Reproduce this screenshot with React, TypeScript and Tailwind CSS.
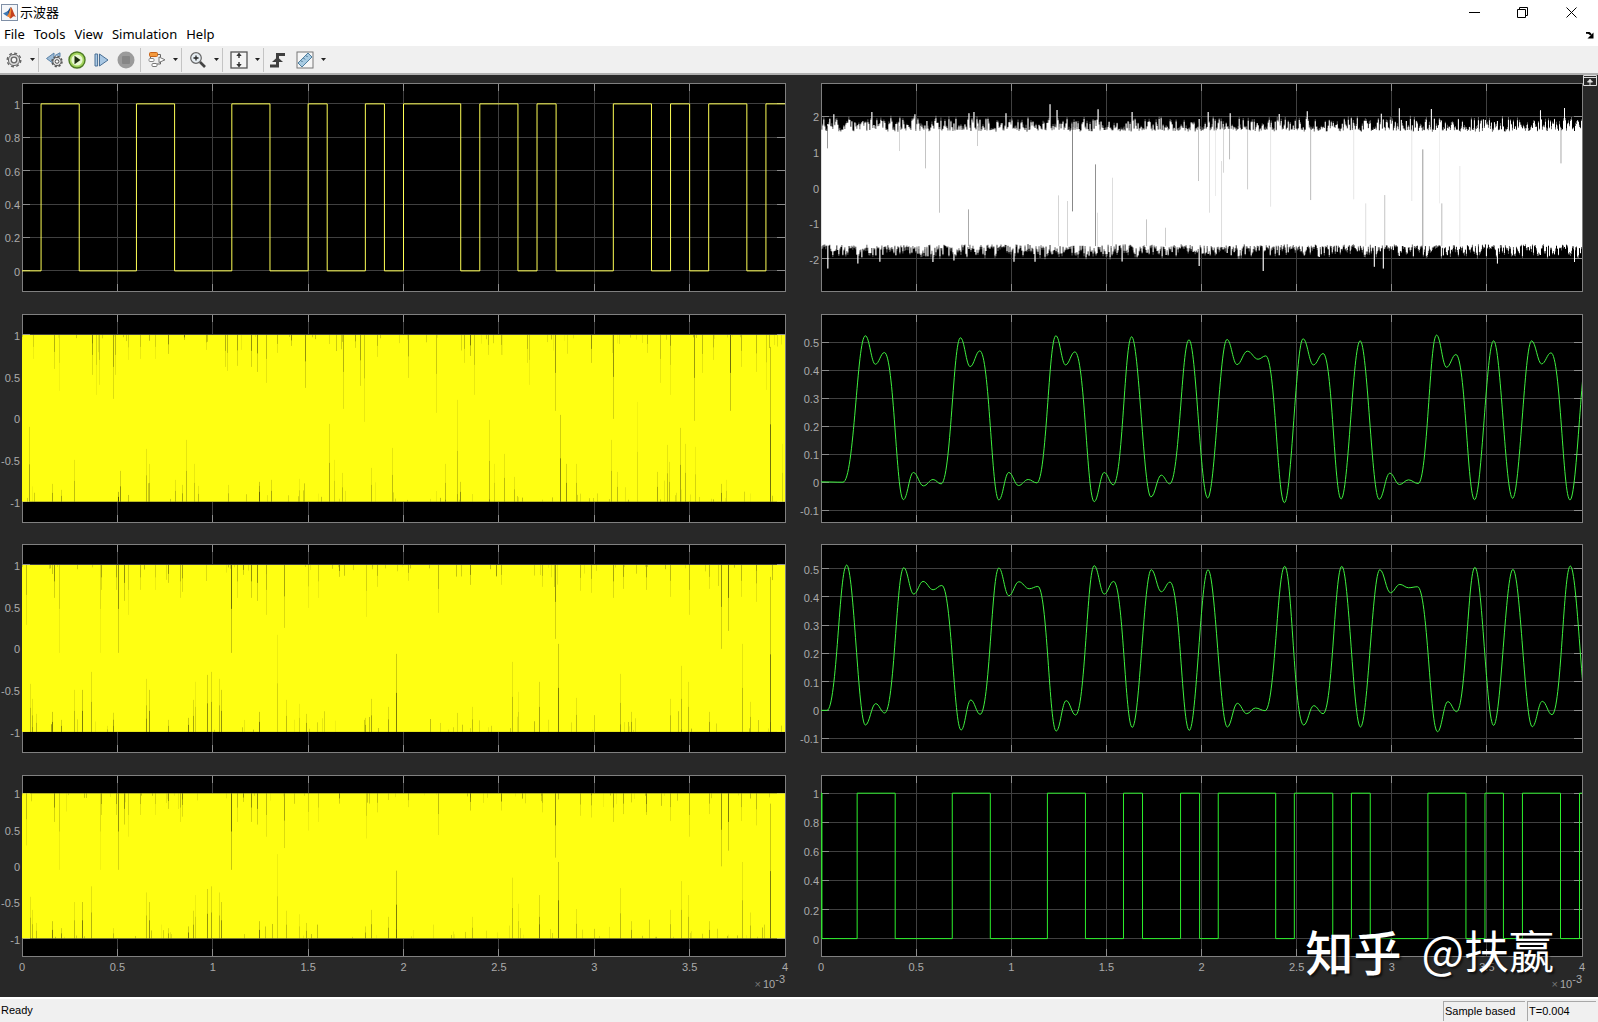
import type { ReactNode } from 'react';

type Point = [number, number];
type Spike = [number, number, number];

const X_TICKS = ['0', '0.5', '1', '1.5', '2', '2.5', '3', '3.5', '4'];

const SOURCE_EDGES = [1, 3, 6, 8, 11, 13, 15, 16, 18, 19, 20, 23, 24, 26, 27, 28, 31, 33, 34, 35, 36, 38, 39];
const OUTPUT_EDGES = [
  0.01, 0.05, 1.9, 3.9, 6.9, 8.9, 11.9, 13.9, 15.9, 16.9, 18.9, 19.9, 20.88, 23.9, 24.88, 26.9, 27.88, 28.87, 31.9,
  33.9, 34.9, 35.87, 36.87, 38.87, 39.87,
];

// turning points of the filtered signals
const FILTER_A: Point[] = [
  [64, 515], [130, 516], [197, 79], [227, 164], [254, 129], [311, 568], [341, 487], [371, 527], [400, 508], [424, 521],
  [482, 85], [511, 171], [540, 124], [597, 569], [627, 487], [656, 526], [685, 508], [711, 518], [768, 79], [797, 166],
  [825, 127], [883, 574], [913, 487], [940, 524], [995, 82], [1053, 560], [1084, 495], [1109, 521], [1167, 91],
  [1223, 563], [1281, 90], [1311, 165], [1342, 125], [1374, 149], [1397, 139], [1453, 577], [1509, 88], [1540, 166],
  [1569, 132], [1623, 566], [1680, 94], [1737, 567], [1769, 489], [1798, 523], [1825, 509], [1854, 520], [1909, 77],
  [1939, 173], [1967, 135], [2023, 568], [2080, 94], [2137, 564], [2194, 94], [2224, 163], [2252, 130], [2309, 569],
  [2366, 90],
];
const FILTER_B: Point[] = [
  [64, 513], [82, 513], [141, 78], [197, 557], [228, 493], [255, 521], [312, 86], [342, 165], [370, 127], [400, 152],
  [426, 139], [484, 572], [513, 482], [541, 525], [597, 87], [627, 170], [657, 128], [688, 149], [714, 142], [769, 575],
  [799, 484], [827, 527], [883, 80], [913, 165], [941, 127], [997, 564], [1054, 92], [1084, 158], [1110, 129],
  [1168, 573], [1224, 92], [1282, 563], [1312, 492], [1340, 523], [1366, 506], [1395, 514], [1454, 82], [1511, 557],
  [1541, 499], [1569, 523], [1625, 82], [1681, 563], [1739, 92], [1771, 161], [1799, 136], [1825, 146], [1852, 143],
  [1912, 577], [1943, 487], [1969, 517], [2024, 85], [2080, 558], [2138, 91], [2196, 562], [2226, 486], [2255, 526],
  [2310, 81], [2367, 560],
];

// gaps in the carrier band: x, length, opacity
const CARRIER_A_TOP: Spike[] = [
  [11, 24, 0.2], [32, 34, 0.35], [37, 56, 0.15], [70, 40, 0.4], [74, 60, 0.2], [77, 50, 0.25], [91, 64, 0.4],
  [93, 40, 0.3], [106, 25, 0.2], [118, 24, 0.25], [133, 24, 0.2], [146, 19, 0.5], [162, 5, 0.6], [184, 15, 0.3],
  [203, 32, 0.35], [205, 36, 0.3], [215, 31, 0.4], [229, 32, 0.5], [235, 37, 0.5], [244, 48, 0.3], [255, 18, 0.3],
  [269, 11, 0.5], [283, 53, 0.5], [321, 74, 0.35], [333, 13, 0.4], [338, 51, 0.4], [342, 87, 0.25], [355, 22, 0.3],
  [386, 43, 0.35], [414, 78, 0.25], [442, 28, 0.3], [448, 21, 0.6], [452, 60, 0.25], [466, 20, 0.3], [479, 20, 0.3],
  [505, 28, 0.3], [507, 50, 0.2], [533, 76, 0.45], [569, 28, 0.5], [591, 84, 0.5], [625, 18, 0.3], [638, 48, 0.25],
  [648, 60, 0.2], [672, 86, 0.45], [680, 38, 0.3], [691, 25, 0.3], [708, 76, 0.65], [719, 32, 0.3], [734, 37, 0.3],
  [744, 55, 0.2],
];
const CARRIER_A_BOTTOM: Spike[] = [
  [7, 75, 0.4], [30, 18, 0.4], [39, 12, 0.4], [52, 42, 0.3], [96, 10, 0.8], [98, 31, 0.5], [124, 53, 0.3],
  [127, 38, 0.3], [153, 22, 0.3], [160, 17, 0.4], [164, 62, 0.3], [172, 38, 0.25], [176, 16, 0.3], [206, 17, 0.3],
  [237, 20, 0.6], [249, 22, 0.4], [277, 23, 0.2], [307, 78, 0.35], [312, 42, 0.2], [320, 29, 0.3], [349, 34, 0.3],
  [370, 54, 0.3], [423, 38, 0.3], [435, 102, 0.25], [438, 20, 0.5], [467, 82, 0.3], [472, 38, 0.2], [482, 48, 0.3],
  [492, 25, 0.3], [538, 87, 0.55], [544, 38, 0.5], [554, 38, 0.3], [589, 62, 0.3], [595, 30, 0.3], [615, 100, 0.15],
  [635, 30, 0.4], [645, 57, 0.3], [647, 40, 0.3], [658, 74, 0.4], [663, 58, 0.3], [673, 55, 0.2], [699, 18, 0.5],
  [704, 22, 0.2], [748, 155, 0.65], [760, 58, 0.2],
];
const CARRIER_B_TOP: Spike[] = [
  [4, 60, 0.3], [32, 33, 0.5], [37, 88, 0.2], [78, 88, 0.15], [79, 25, 0.4], [94, 25, 0.4], [96, 88, 0.5],
  [102, 36, 0.5], [106, 50, 0.2], [118, 25, 0.3], [133, 25, 0.2], [146, 18, 0.5], [158, 33, 0.3], [160, 27, 0.4],
  [209, 88, 0.65], [215, 33, 0.3], [221, 10, 0.5], [229, 33, 0.5], [235, 36, 0.5], [244, 50, 0.3], [262, 63, 0.4],
  [286, 43, 0.2], [296, 33, 0.2], [317, 12, 0.5], [344, 52, 0.2], [355, 22, 0.3], [386, 16, 0.3], [416, 48, 0.3],
  [448, 20, 0.5], [479, 20, 0.3], [520, 22, 0.3], [533, 74, 0.5], [558, 26, 0.3], [569, 28, 0.3], [591, 33, 0.4],
  [601, 24, 0.4], [624, 25, 0.4], [648, 32, 0.3], [667, 50, 0.3], [687, 24, 0.3], [699, 84, 0.5], [706, 66, 0.6],
  [719, 32, 0.3], [734, 37, 0.3],
];
const CARRIER_B_BOTTOM: Spike[] = [
  [8, 48, 0.3], [10, 33, 0.3], [14, 18, 0.3], [30, 20, 0.6], [39, 12, 0.5], [52, 42, 0.3], [60, 42, 0.6],
  [69, 60, 0.35], [91, 12, 0.3], [124, 53, 0.3], [127, 42, 0.5], [146, 12, 0.4], [166, 14, 0.6], [171, 32, 0.4],
  [173, 50, 0.2], [185, 57, 0.5], [189, 60, 0.4], [197, 53, 0.3], [199, 42, 0.5], [237, 20, 0.6], [255, 97, 0.2],
  [264, 32, 0.3], [277, 28, 0.2], [284, 18, 0.4], [343, 14, 0.4], [349, 33, 0.4], [366, 25, 0.4], [374, 78, 0.6],
  [450, 25, 0.3], [490, 70, 0.3], [496, 40, 0.2], [517, 50, 0.4], [536, 88, 0.6], [554, 34, 0.3], [598, 58, 0.3],
  [609, 20, 0.4], [648, 33, 0.3], [659, 66, 0.3], [666, 50, 0.3], [687, 20, 0.4], [720, 88, 0.3], [728, 30, 0.3],
  [748, 155, 0.6],
];

const NOISE_PEAKS: Record<number, number> = {
  100: 135, 214: 128, 345: 135, 507: 132, 520: 128, 617: 132, 749: 105, 771: 122, 892: 120, 996: 128, 1224: 128,
  1289: 132, 1436: 134, 1521: 126, 1742: 133, 1797: 117, 1892: 119, 2219: 123, 2291: 116,
};
const NOISE_DIPS: Record<number, number> = {
  83: 597, 173: 582, 238: 577, 397: 578, 461: 573, 640: 577, 703: 577, 965: 576, 1195: 590, 1387: 605, 1720: 592,
  1747: 597, 2089: 582, 2320: 578,
};
// x, from, to, opacity
const NOISE_GAPS: [number, number, number, number][] = [
  [82, 170, 237, 0.6], [298, 170, 245, 0.25], [376, 180, 297, 0.35], [418, 180, 430, 0.35], [505, 420, 530, 0.5],
  [532, 170, 230, 0.3], [775, 378, 530, 0.25], [802, 395, 530, 0.25], [817, 150, 426, 0.7], [886, 285, 530, 0.65],
  [892, 430, 530, 0.2], [937, 325, 530, 0.2], [1039, 450, 530, 0.35], [1096, 475, 530, 0.3], [1195, 160, 335, 0.35],
  [1228, 170, 430, 0.2], [1246, 170, 380, 0.12], [1264, 275, 530, 0.2], [1270, 170, 310, 0.25], [1288, 170, 270, 0.4],
  [1342, 170, 360, 0.3], [1411, 170, 412, 0.15], [1531, 170, 392, 0.4], [1660, 170, 390, 0.15], [1696, 402, 530, 0.2],
  [1753, 377, 550, 0.35], [1834, 170, 395, 0.15], [1867, 240, 530, 0.6], [1917, 170, 402, 0.1], [1924, 402, 530, 0.4],
  [1978, 290, 530, 0.15], [2281, 170, 282, 0.5],
];

function createRandom(seed: number) {
  let s = seed;
  return () => {
    s = (s * 16807) % 2147483647;
    return s / 2147483647;
  };
}

function squarePath(edges: number[], startHigh = false) {
  let high = startHigh;
  let d = `M0 ${high ? 0.125 : 1.125}`;
  for (const x of edges) {
    d += `H${x}`;
    high = !high;
    d += `V${high ? 0.125 : 1.125}`;
  }
  return `${d}H40`;
}

function curvePath(points: Point[]) {
  // a turning point next to a small ripple is left more gently
  const ease = (a?: Point, b?: Point) => (a && b && Math.abs(a[1] - b[1]) < 60 ? 0.5 : 0.37);
  let d = `M${points[0][0]} ${points[0][1]}`;
  for (let i = 1; i < points.length; i++) {
    const [x0, y0] = points[i - 1];
    const [x1, y1] = points[i];
    const big = Math.abs(y1 - y0) > 200;
    const k0 = big ? ease(points[i - 2], points[i - 1]) : 0.4;
    const k1 = big ? ease(points[i], points[i + 1]) : 0.4;
    d += `C${x0 + (x1 - x0) * k0} ${y0} ${x1 - (x1 - x0) * k1} ${y1} ${x1} ${y1}`;
  }
  return d;
}

function noisePaths() {
  const rnd = createRandom(77);
  let solid = '';
  let soft = '';
  for (let x = 65; x < 2345; x += 3) {
    let top = 180 - Math.pow(rnd(), 2) * 36 + rnd() * 8;
    let bottom = 532 + Math.pow(rnd(), 2) * 32 - rnd() * 8;
    let spread = 10;
    for (let i = x - 1; i < x + 2; i++) {
      if (NOISE_PEAKS[i]) {
        top = NOISE_PEAKS[i];
        spread = 0;
      }
      if (NOISE_DIPS[i]) {
        bottom = NOISE_DIPS[i];
        spread = 0;
      }
    }
    solid += `M${x} ${top}V${bottom}h3V${top}z`;
    soft += `M${x} ${top - rnd() * spread}h3V${bottom + rnd() * spread}h-3z`;
  }
  return { solid, soft };
}

const NOISE = noisePaths();

function Carrier({ top, bottom, seed }: { top: Spike[]; bottom: Spike[]; seed: number }) {
  const rnd = createRandom(seed);
  const small = Array.from({ length: 110 }, (_, i) => ({
    x: Math.floor(rnd() * 760),
    len: 2 + rnd() * rnd() * 22,
    opacity: 0.05 + rnd() * 0.2,
    up: i % 2 === 0,
  }));
  return (
    <svg y="10%" height="80%" viewBox="0 0 763 167" preserveAspectRatio="none">
      <rect width="763" height="167" fill="#ffff12" />
      {top.map(([x, len, opacity]) => (
        <g key={`t${x}`} fill="#000" opacity={opacity * 0.85}>
          <rect x={x} width="1" height={len} opacity="0.4" />
          <rect x={x} width="1" height={len * 0.5} />
        </g>
      ))}
      {bottom.map(([x, len, opacity]) => (
        <g key={`b${x}`} fill="#000" opacity={opacity * 0.85}>
          <rect x={x} y={167 - len} width="1" height={len} opacity="0.4" />
          <rect x={x} y={167 - len * 0.5} width="1" height={len * 0.5} />
        </g>
      ))}
      {small.map((s, i) => (
        <rect key={i} x={s.x} y={s.up ? 0 : 167 - s.len} width="1" height={s.len} opacity={s.opacity} />
      ))}
    </svg>
  );
}

interface PlotProps {
  label: string;
  min: number;
  max: number;
  ticks: number[];
  children: ReactNode;
  showX?: boolean;
}

function Plot({ label, min, max, ticks, children, showX }: PlotProps) {
  const yPos = (v: number) => `${((max - v) / (max - min)) * 100}%`;
  return (
    <svg
      role="img"
      aria-label={label}
      className="block h-full w-full overflow-visible font-['Liberation_Sans',sans-serif] text-[11px]"
    >
      <rect width="100%" height="100%" fill="#000" />
      <g stroke="#404040" shapeRendering="crispEdges">
        {ticks.map((v) => (
          <line key={v} x1="0" x2="100%" y1={yPos(v)} y2={yPos(v)} />
        ))}
        {X_TICKS.slice(1, -1).map((t, i) => (
          <line key={t} x1={`${(i + 1) * 12.5}%`} x2={`${(i + 1) * 12.5}%`} y1="0" y2="100%" />
        ))}
      </g>
      <g stroke="#8c8c8c" shapeRendering="crispEdges">
        {ticks.map((v) => (
          <svg key={v} y={yPos(v)} className="overflow-visible">
            <line x1="0" x2="8" />
            <svg x="100%" className="overflow-visible">
              <line x1="-8" x2="0" />
            </svg>
          </svg>
        ))}
        {X_TICKS.slice(1, -1).map((t, i) => (
          <svg key={t} x={`${(i + 1) * 12.5}%`} className="overflow-visible">
            <line y1="0" y2="8" />
            <svg y="100%" className="overflow-visible">
              <line y1="-8" y2="0" />
            </svg>
          </svg>
        ))}
      </g>
      <rect width="100%" height="100%" fill="none" stroke="#808080" shapeRendering="crispEdges" />
      {children}
      <g fill="#ababab" textAnchor="end">
        {ticks.map((v) => (
          <text key={v} x="-2" y={yPos(v)} dy="5">
            {v}
          </text>
        ))}
      </g>
      {showX && (
        <g fill="#ababab">
          {X_TICKS.map((t, i) => (
            <text key={t} x={`${i * 12.5}%`} y="100%" dy="14" textAnchor="middle">
              {t}
            </text>
          ))}
          <text x="100%" y="100%" dy="31" textAnchor="end">
            <tspan fill="#777">×</tspan>
            <tspan dx="2">10</tspan>
            <tspan dy="-5">-3</tspan>
          </text>
        </g>
      )}
    </svg>
  );
}

function Trace({ viewBox, d, stroke }: { viewBox: string; d: string; stroke: string }) {
  return (
    <svg viewBox={viewBox} preserveAspectRatio="none">
      <path d={d} fill="none" stroke={stroke} vectorEffect="non-scaling-stroke" />
    </svg>
  );
}

function Caret() {
  return (
    <svg width="5" height="3" viewBox="0 0 5 3" className="ml-auto">
      <path d="M0 0h5L2.5 3z" fill="#222" />
    </svg>
  );
}

function Divider() {
  return <span className="h-6 w-px border-l border-[#c4c4c4]" />;
}

function ToolButton({ label, className, children }: { label: string; className: string; children: ReactNode }) {
  return (
    <button type="button" aria-label={label} className={`flex h-6 items-center ${className}`}>
      {children}
    </button>
  );
}

function GearIcon({ size, color }: { size: number; color: string }) {
  return (
    <svg width={size} height={size} viewBox="0 0 16 16" fill="none" stroke={color}>
      <circle cx="8" cy="8" r="6.8" strokeWidth="1.4" strokeDasharray="3 2.34" />
      <circle cx="8" cy="8" r="5.6" strokeWidth="1" fill="#ddd" />
      <circle cx="8" cy="8" r="2.8" strokeWidth="1.3" fill="#f6f6f6" />
    </svg>
  );
}

function Toolbar() {
  return (
    <div role="toolbar" className="flex h-[29px] items-center border-b-2 border-[#b0b0b0] bg-[#f0f0f0] pl-[6px]">
      <ToolButton label="Settings" className="w-[32px] pr-[3px]">
        <GearIcon size={16} color="#666" />
        <Caret />
      </ToolButton>
      <Divider />
      <ToolButton label="Step back" className="w-[29px] pl-[7px]">
        <svg width="17" height="16" viewBox="0 0 17 16">
          <path d="M0.5 6.5 8 1v11z" fill="#9dbbd6" stroke="#5b82a8" />
          <path d="M9 3.5 14 .8v4" fill="#9dbbd6" stroke="#5b82a8" />
          <circle cx="11" cy="9.5" r="5" fill="none" stroke="#555" strokeWidth="1.5" strokeDasharray="2.2 1.7" />
          <circle cx="11" cy="9.5" r="4.2" fill="#ddd" stroke="#555" />
          <circle cx="11" cy="9.5" r="1.8" fill="#fff" stroke="#555" />
        </svg>
      </ToolButton>
      <ToolButton label="Run" className="w-[26px]">
        <svg width="18" height="18" viewBox="0 0 18 18">
          <circle cx="9" cy="9" r="8" fill="#a4d65e" stroke="#4d7a24" strokeWidth="1.4" />
          <circle cx="9" cy="9" r="5.6" fill="#e9f8d2" />
          <path d="M6.5 4.8v8.4l6-4.2z" fill="#1c2c10" />
        </svg>
      </ToolButton>
      <ToolButton label="Step forward" className="w-[23px]">
        <svg width="15" height="16" viewBox="0 0 15 16" fill="#a9c8e4" stroke="#4a7095">
          <path d="M1 2h2.6v12H1z" />
          <path d="M5.5 2 14 8l-8.500 6z" />
        </svg>
      </ToolButton>
      <ToolButton label="Stop" className="w-[23px]">
        <svg width="18" height="18" viewBox="0 0 18 18">
          <circle cx="9" cy="9" r="8.500" fill="#9b9b9b" />
          <rect x="5" y="5" width="8" height="8" rx="1" fill="#868686" />
        </svg>
      </ToolButton>
      <Divider />
      <ToolButton label="Highlight block" className="w-[40px] pr-[3px] pl-[7px]">
        <svg width="18" height="17" viewBox="0 0 18 17">
          <path d="M9.500 3.500h3v3M2.500 8v-4.500M9 13h3.500v-2.500" fill="none" stroke="#666" />
          <rect x="1.500" y="1.500" width="8" height="4" rx="1" fill="#f39a3e" stroke="#c8641a" />
          <rect x="1" y="7.500" width="5" height="3" rx="1" fill="#fff" stroke="#888" />
          <rect x="4" y="12.500" width="5" height="3" rx="1" fill="#fff" stroke="#777" />
          <path d="M11 6v5.500l6-2.700z" fill="#fff" stroke="#777" />
        </svg>
        <Caret />
      </ToolButton>
      <Divider />
      <ToolButton label="Zoom" className="w-[40px] pr-[3px] pl-[7px]">
        <svg width="18" height="18" viewBox="0 0 18 18" fill="none">
          <circle cx="7" cy="7" r="5.300" fill="#e6edf2" stroke="#666" strokeWidth="1.200" />
          <path d="M4.500 7h5M7 4.500v5" stroke="#222" strokeWidth="1.300" />
          <path d="m11 11 5 5" stroke="#444" strokeWidth="2.600" />
        </svg>
        <Caret />
      </ToolButton>
      <Divider />
      <ToolButton label="Scale axes limits" className="w-[40px] pr-[3px] pl-[7px]">
        <svg width="18" height="18" viewBox="0 0 18 18">
          <rect x="1" y="1" width="16" height="16" fill="#f4f4f4" stroke="#555" strokeWidth="1.300" />
          <path d="M9 1.500 6.300 5h2v2h1.400V5h2zM9 16.500 6.300 13h2v-2h1.400v2h2z" fill="#333" />
        </svg>
        <Caret />
      </ToolButton>
      <Divider />
      <ToolButton label="Triggers" className="w-[32px] pl-[6px]">
        <svg width="16" height="16" viewBox="0 0 16 16" fill="none">
          <path d="M0 14h7.500V2.500H15" stroke="#3f3f3f" strokeWidth="3" />
          <path d="M2 10 7.500 5l5.500 5z" fill="#3f3f3f" />
        </svg>
      </ToolButton>
      <ToolButton label="Measurements" className="w-[30px]">
        <svg width="18" height="18" viewBox="0 0 18 18">
          <rect x="1" y="1" width="16" height="16" fill="#f6f6f6" stroke="#777" />
          <path d="M2 12 12 2l4 4L6 16z" fill="#a8cbe2" stroke="#4f7f9f" />
          <path d="m5 9.500 1.500 1.500M7.500 7 9 8.500M10 4.500 11.500 6" stroke="#3d6a88" />
        </svg>
        <Caret />
      </ToolButton>
    </div>
  );
}

function TitleBar() {
  return (
    <header className="flex h-6 items-center bg-white">
      <svg width="17" height="17" viewBox="0 0 17 17" className="ml-px">
        <rect x=".5" y=".5" width="16" height="16" fill="#f4f6f9" stroke="#7f8fa6" />
        <path d="m2 9.500 4-2 2.500 2.200-2.500 2.600z" fill="#3b78b4" />
        <path d="M6 7.500c1.500-.5 2.500-4 4-4.500L8 10z" fill="#1f4e86" />
        <path d="M10 3c1.500 1.500 2.800 7 5 10-1.800-1-2.800-.8-3.500 0-1 1-2 1.500-2.500 1.500-.5-1.500-1.500-2.500-3-2.200C8 10.500 9 6 10 3z" fill="#c4401f" />
        <path d="M10 3c.5 2 .3 6-1 11.500-.5-1.500-1.500-2.500-3-2.200C8 10.500 9 6 10 3z" fill="#ef8a35" />
      </svg>
      <h1 className="ml-[2px] font-['Noto_Sans_CJK_SC',sans-serif] text-[13px] leading-6 text-black">示波器</h1>
      <div className="ml-auto flex pr-[2px]">
        <button type="button" aria-label="Minimize" className="flex h-6 w-12 items-center justify-center">
          <svg width="11" height="11" viewBox="0 0 11 11">
            <path d="M0 5.500h11" stroke="#000" />
          </svg>
        </button>
        <button type="button" aria-label="Restore" className="flex h-6 w-12 items-center justify-center">
          <svg width="11" height="11" viewBox="0 0 11 11" fill="none" stroke="#000">
            <path d="M.5 2.500h8v8h-8zM2.500 2.500v-2h8v8h-2" />
          </svg>
        </button>
        <button type="button" aria-label="Close" className="flex h-6 w-[50px] items-center justify-center">
          <svg width="11" height="11" viewBox="0 0 11 11" stroke="#000">
            <path d="m.5.5 10 10M10.500.5l-10 10" />
          </svg>
        </button>
      </div>
    </header>
  );
}

function MenuBar() {
  return (
    <nav className="flex h-[22px] items-center bg-white pl-[4px] font-['Noto_Sans',sans-serif] text-[13px] text-black">
      <div className="flex gap-[9px]">
        {['File', 'Tools', 'View', 'Simulation', 'Help'].map((item) => (
          <button key={item} type="button">
            {item}
          </button>
        ))}
      </div>
      <button type="button" aria-label="Dock" className="mr-[4px] ml-auto">
        <svg width="8" height="7" viewBox="0 0 8 7">
          <path d="M0 1c2-.8 4 .2 5 2" fill="none" stroke="#000" strokeWidth="2" />
          <path d="M7.500.5v6h-6z" fill="#000" />
        </svg>
      </button>
    </nav>
  );
}

export default function App() {
  const fifths = [0, 0.2, 0.4, 0.6, 0.8, 1];
  const halves = [-1, -0.5, 0, 0.5, 1];
  const tenths = [-0.1, 0, 0.1, 0.2, 0.3, 0.4, 0.5];

  return (
    <div className="relative flex h-screen flex-col overflow-hidden bg-[#282828]">
      <TitleBar />
      <MenuBar />
      <Toolbar />

      <main className="grid min-h-0 flex-1 grid-cols-[763fr_761fr] grid-rows-[209fr_209fr_209fr_182fr] gap-x-9 gap-y-[22px] pt-2 pr-4 pb-10 pl-[22px]">
        <Plot label="Source bits" min={-0.125} max={1.125} ticks={fifths}>
          <Trace viewBox="0 0 40 1.25" d={squarePath(SOURCE_EDGES)} stroke="#ffff55" />
        </Plot>
        <Plot label="Noisy signal" min={-2.93} max={2.94} ticks={[-2, -1, 0, 1, 2]}>
          <svg viewBox="64 41 2281 626" preserveAspectRatio="none">
            <path d={NOISE.soft} fill="#fff" opacity="0.4" />
            <path d={NOISE.solid} fill="#fff" />
            {NOISE_GAPS.map(([x, from, to, opacity]) => (
              <rect key={x} x={x} y={from} width="2" height={to - from} opacity={opacity} />
            ))}
          </svg>
        </Plot>

        <Plot label="Carrier" min={-1.25} max={1.25} ticks={halves}>
          <Carrier top={CARRIER_A_TOP} bottom={CARRIER_A_BOTTOM} seed={11} />
        </Plot>
        <Plot label="Filter output 1" min={-0.145} max={0.601} ticks={tenths}>
          <Trace viewBox="64 14 2281 623" d={curvePath(FILTER_A)} stroke="#3ff03f" />
        </Plot>

        <Plot label="Carrier shifted" min={-1.25} max={1.25} ticks={halves}>
          <Carrier top={CARRIER_B_TOP} bottom={CARRIER_B_BOTTOM} seed={23} />
        </Plot>
        <Plot label="Filter output 2" min={-0.151} max={0.587} ticks={tenths}>
          <Trace viewBox="64 15 2281 625" d={curvePath(FILTER_B)} stroke="#3ff03f" />
        </Plot>

        <Plot label="Modulated signal" min={-1.25} max={1.25} ticks={halves} showX>
          <Carrier top={CARRIER_B_TOP} bottom={CARRIER_B_BOTTOM} seed={31} />
        </Plot>
        <Plot label="Recovered bits" min={-0.125} max={1.125} ticks={fifths} showX>
          <Trace viewBox="0 0 40 1.25" d={squarePath(OUTPUT_EDGES)} stroke="#2cf02c" />
        </Plot>
      </main>

      <footer className="flex h-[25px] items-center border-t-2 border-white bg-[#f0f0f0] font-['Liberation_Sans',sans-serif] text-[11px] text-black">
        <span className="pl-px">Ready</span>
        <span className="ml-auto h-5 w-[82px] border-t border-l border-[#a8a8a8] pl-px leading-[18px]">
          Sample based
        </span>
        <span className="mr-[2px] ml-[2px] h-5 w-[69px] border-t border-l border-[#a8a8a8] pl-px leading-[18px]">
          T=0.004
        </span>
      </footer>

      <button type="button" aria-label="Maximize axes" className="absolute top-[75px] right-px">
        <svg width="14" height="11" viewBox="0 0 14 11" fill="none" stroke="#ddd">
          <path d="M.5 .5h13v10H.5zM.5 2.500h13" />
          <path d="M7 4v6M4.500 7 7 4.500 9.500 7z" fill="#fff" />
        </svg>
      </button>

      <div className="absolute right-[44px] bottom-10 flex items-center gap-5 font-['Noto_Sans_CJK_SC',sans-serif] leading-[64px] text-white [text-shadow:2px_2px_2px_rgba(0,0,0,0.6)]">
        <span className="text-[48px] font-medium">知乎</span>
        <span className="text-[45px]">@扶嬴</span>
      </div>
    </div>
  );
}
